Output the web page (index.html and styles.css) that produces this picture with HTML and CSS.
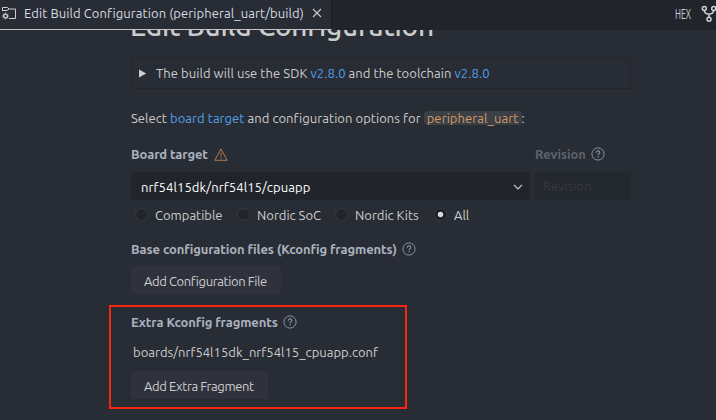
FILE: index.html
```html
<!DOCTYPE html>
<html lang="en">
<head>
<meta charset="utf-8">
<title>Edit Build Configuration</title>
<link rel="stylesheet" href="styles.css">
</head>
<body>
<svg class="defs" width="0" height="0">
  <symbol id="help" viewBox="0 0 14 14">
    <circle cx="7" cy="7" r="6.100" fill="none" stroke="currentColor"/>
    <path d="M5.2 5.7C5.2 4.5 6 3.900 7 3.900s1.800.6 1.800 1.600c0 1.300-1.700 1.300-1.700 2.700" fill="none" stroke="currentColor" stroke-width="1.100"/>
    <rect x="6.5" y="9.2" width="1.2" height="1.2" fill="currentColor"/>
  </symbol>
</svg>
<header class="tabbar">
  <div class="tab">
    <svg class="tab-icon" width="15" height="14" viewBox="0 0 15 14" fill="none" stroke="currentColor">
      <path d="M.5 5V1.500h5l1.500 1.500h6.500v9.500H7M.5 4.500H5L7 3"/>
      <circle cx="3.500" cy="10" r="1.900" stroke-width="1.400"/>
      <path d="M3.500 6.700v1.400M3.500 11.900v1.400M.2 10h1.400M5.400 10h1.400M1.200 7.700l1 1M4.800 11.300l1 1M5.800 7.700l-1 1M2.200 11.300l-1 1"/>
    </svg>
    <span class="tab-title">Edit Build Configuration (peripheral_uart/build)</span>
    <svg class="close" width="10" height="10" viewBox="0 0 10 10" fill="none" stroke="currentColor" stroke-width="1.1"><path d="M1 1l8 8M9 1L1 9"/></svg>
  </div>
  <div class="actions">
    <span class="hex">HEX</span>
    <svg width="15" height="18" viewBox="0 0 15 18" fill="none" stroke="currentColor" stroke-width="1.5">
      <circle cx="3.300" cy="3.500" r="2"/><circle cx="12.700" cy="3.500" r="2"/><circle cx="8" cy="14.300" r="2"/>
      <path d="M3.300 5.500c.2 2.300 2 3.500 4.700 3.500s4.500-1.200 4.700-3.500M8 9v3.300"/>
    </svg>
  </div>
</header>
<main class="page">
  <div class="heading-clip"><h1 class="heading">Edit Build Configuration</h1></div>
  <div class="summary">
    <svg width="8" height="9" viewBox="0 0 8 9"><path d="M0 .5L7.300 4.500 0 8.500z" fill="currentColor"/></svg>
    <span class="summary-text">The build will use the SDK <a>v2.8.0</a> and the toolchain <a>v2.8.0</a></span>
  </div>
  <p class="intro">Select <a>board target</a> and configuration options for <code>peripheral_uart</code>:</p>
  <div class="target-row">
    <div class="target">
      <div class="label"><span>Board target</span>
        <svg class="warn" width="14" height="13" viewBox="0 0 14 13" fill="none" stroke="currentColor"><path d="M7 .9L13.200 12.300H.8zM7 4.500v4M7 9.500v1.200"/></svg>
      </div>
      <div class="select"><span>nrf54l15dk/nrf54l15/cpuapp</span>
        <svg width="10" height="6" viewBox="0 0 10 6" fill="none" stroke="currentColor" stroke-width="1.2"><path d="M1 .8l4 4 4-4"/></svg>
      </div>
    </div>
    <div class="revision">
      <div class="label dim"><span>Revision</span><svg class="help"><use href="#help"/></svg></div>
      <div class="input"><span>Revision</span></div>
    </div>
  </div>
  <div class="radios">
    <div class="radio r1"><i></i><span>Compatible</span></div>
    <div class="radio r2"><i></i><span>Nordic SoC</span></div>
    <div class="radio r3"><i></i><span>Nordic Kits</span></div>
    <div class="radio r4"><i class="on"></i><span>All</span></div>
  </div>
  <div class="label base"><span>Base configuration files (Kconfig fragments)</span><svg class="help"><use href="#help"/></svg></div>
  <div class="button b1"><span>Add Configuration File</span></div>
  <section class="extra">
    <div class="label"><span>Extra Kconfig fragments</span><svg class="help"><use href="#help"/></svg></div>
    <div class="file">boards/nrf54l15dk_nrf54l15_cpuapp.conf</div>
    <div class="button b2"><span>Add Extra Fragment</span></div>
  </section>
</main>
</body>
</html>
```
FILE: styles.css
```css
* { box-sizing: border-box; }
body {
  margin: 0;
  width: 716px;
  height: 420px;
  overflow: hidden;
  background: #282c34;
  color: #cccccc;
  font: 13px/18px "Ubuntu", "Noto Sans", sans-serif;
  white-space: nowrap;
}
.defs { position: absolute; }
svg { flex: none; display: block; }
a { color: #52a0ec; }

.tabbar { display: flex; justify-content: space-between; height: 30px; background: #21252b; }
.tab {
  display: flex;
  align-items: center;
  width: 332px;
  height: 30px;
  padding: 0 0 4px 2px;
  background: #282c34;
  border-bottom: 1px solid #c5c0ca;
  border-right: 1px solid #181a1f;
}
.tab-title { width: 279px; margin-left: 7px; color: #d7dae0; letter-spacing: .08px; }
.close { margin-left: 9px; }
.actions { display: flex; align-items: center; width: 41px; padding-bottom: 3px; color: #d0d2d6; }
.hex { width: 26px; font-size: 15.5px; transform: scaleX(.55); transform-origin: left; }

.page { padding-left: 131px; }
.heading-clip { display: flex; align-items: flex-end; height: 27px; overflow: hidden; }
.heading { margin: 0 0 14px -1px; font-size: 28px; line-height: 34px; font-weight: 500; letter-spacing: -.2px; }
.summary {
  display: flex;
  align-items: center;
  width: 500px;
  height: 32px;
  padding-left: 7px;
  border: 1px solid #21252b;
  border-radius: 2px;
}
.summary-text { margin-left: 9px; letter-spacing: .06px; }
.intro { margin: 20px 0 0; letter-spacing: .05px; }
code {
  padding: 0 3px;
  border-radius: 4px;
  background: #3b3f46;
  color: #d19a66;
  font: inherit;
  letter-spacing: .08px;
}
.target-row { display: flex; gap: 5px; margin-top: 18px; }
.target { width: 399px; }
.revision { width: 96px; }
.label { display: flex; align-items: center; height: 18px; color: #abb2bf; font-weight: 600; letter-spacing: -.1px; }
.help { width: 14px; height: 14px; margin-left: 5px; color: #8b919c; }
.warn { margin-left: 6px; color: #b07c50; }
.dim { color: #5c626d; }
.select, .input { display: flex; align-items: center; height: 28px; margin-top: 9px; background: #21252b; border-radius: 2px; }
.select { justify-content: space-between; padding: 1px 7px 0 10px; color: #fff; letter-spacing: .1px; }
.select svg { color: #ccc; }
.input { padding-left: 8px; color: #363a41; background: #23272e; }
.radios { display: flex; height: 18px; margin-top: 6px; letter-spacing: 0; }
.radio { display: flex; align-items: center; padding-left: 4px; gap: 7px; }
.radio i { width: 13px; height: 13px; margin-top: -1px; border: 1px solid #363a43; border-radius: 50%; background: #21252b; }
.radio .on { background: radial-gradient(circle, #dcdcdc 2.3px, #1c2026 3.2px); }
.r1 { width: 102px; }
.r2 { width: 98px; }
.r3 { width: 99px; }
.base { margin-top: 16px; }
.button { display: flex; align-items: center; height: 28px; padding: 2px 0 0 13px; border-radius: 2px; background: #2f313c; letter-spacing: -.4px; }
.b1 { width: 150px; margin-top: 8px; }
.extra { width: 298px; height: 104px; margin: 11px 0 0 -22px; padding: 6px 0 0 20px; border: 2px solid #fa2414; }
.file { margin: 12px 0 10px 2px; letter-spacing: .03px; }
.b2 { width: 137px; }
```
